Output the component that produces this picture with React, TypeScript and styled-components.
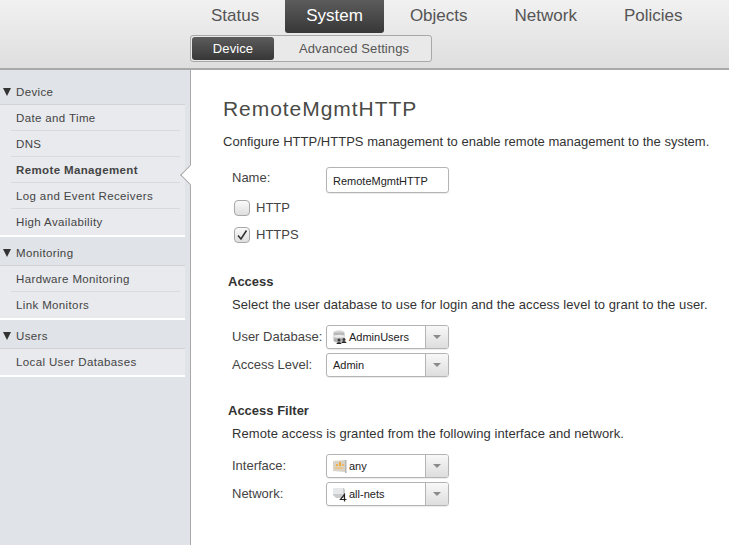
import type { ReactNode } from 'react';
import styled, { createGlobalStyle } from 'styled-components';

const GlobalStyle = createGlobalStyle`
    html, body {
        margin: 0;
        padding: 0;
        height: 100%;
        overflow: hidden;
        background: #fff;
        font-family: 'Liberation Sans', Arial, sans-serif;
    }
`;

const Page = styled.div`
    width: 729px;
    height: 545px;
    display: flex;
    flex-direction: column;
    color: #333;
    overflow: hidden;
`;

const Header = styled.header`
    height: 68px;
    flex-shrink: 0;
    box-sizing: content-box;
    border-bottom: 2px solid #a9a9a9;
    background: linear-gradient(#f1f1f1, #dedede);
    padding-left: 190px;
`;

const TopTabs = styled.nav`
    display: flex;
    gap: 5px;
    height: 33px;
    margin-bottom: 2px;
`;

const TopTab = styled.div<{ $active?: boolean }>`
    padding: 0 21px;
    font-size: 17px;
    line-height: 31px;
    border-radius: 0 0 3px 3px;
    color: ${({ $active }) => ($active ? '#fff' : '#555')};
    background: ${({ $active }) => ($active ? 'linear-gradient(#5c5c5c, #373737)' : 'none')};
`;

const SubTabs = styled.div`
    display: flex;
    box-sizing: border-box;
    width: 242px;
    height: 27px;
    padding: 1px;
    border: 1px solid #a8a8a8;
    border-radius: 3px;
    background: #e9e9e9;
`;

const SubTab = styled.div<{ $active?: boolean }>`
    box-sizing: border-box;
    width: ${({ $active }) => ($active ? '82px' : '156px')};
    padding-left: ${({ $active }) => ($active ? '0' : '25px')};
    text-align: ${({ $active }) => ($active ? 'center' : 'left')};
    font-size: 13px;
    letter-spacing: 0.1px;
    line-height: 23px;
    border-radius: 3px;
    color: ${({ $active }) => ($active ? '#fff' : '#555')};
    background: ${({ $active }) => ($active ? 'linear-gradient(#5c5c5c, #373737)' : 'none')};
`;

const Body = styled.div`
    flex: 1;
    display: flex;
    min-height: 0;
`;

const Sidebar = styled.aside`
    box-sizing: border-box;
    width: 191px;
    flex-shrink: 0;
    padding: 8px 5px 0 0;
    background: #e0e3e7;
    border-right: 1px solid #a9a9a9;
`;

const GroupTitle = styled.div`
    box-sizing: border-box;
    display: flex;
    align-items: center;
    gap: 5px;
    height: 27px;
    padding: 1px 0 0 3px;
    font-size: 11.5px;
    letter-spacing: 0.37px;
    color: #444;
    border-bottom: 1px solid #d0d2d5;
`;

const Arrow = styled.span`
    width: 0;
    height: 0;
    border-left: 4px solid transparent;
    border-right: 4px solid transparent;
    border-top: 8px solid #333;
`;

const Group = styled.div`
    background: #e8eaee;
    border-bottom: 2px solid #fff;
    margin-bottom: 2px;
`;

const Item = styled.div<{ $active?: boolean }>`
    position: relative;
    height: 26px;
    margin: 0 5px 0 11px;
    box-sizing: border-box;
    padding: 1px 0 0 5px;
    line-height: 25px;
    font-size: 11.5px;
    letter-spacing: 0.37px;
    font-weight: ${({ $active }) => ($active ? 700 : 400)};
    color: #444;
    border-bottom: 1px solid #d9dadd;
    &:last-child {
        border-bottom: none;
    }
`;

const Pointer = styled.span`
    position: absolute;
    right: -17px;
    top: 11px;
    width: 14px;
    height: 14px;
    background: #fff;
    border-left: 1px solid #a9a9a9;
    border-bottom: 1px solid #a9a9a9;
    box-sizing: border-box;
    transform: rotate(45deg);
`;

const Main = styled.main`
    flex: 1;
    padding: 26px 0 0 32px;
    background: #fff;
`;

const Title = styled.h1`
    margin: 0 0 12px;
    font-size: 21px;
    font-weight: 400;
    line-height: 26px;
    color: #4a4a46;
    letter-spacing: 0.95px;
`;

const Description = styled.p<{ $indent?: boolean }>`
    margin: 0;
    padding-left: ${({ $indent }) => ($indent ? '9px' : '0')};
    font-size: 13px;
    letter-spacing: ${({ $indent }) => ($indent ? '0.07px' : '0.02px')};
    line-height: 16px;
    color: #333;
    white-space: nowrap;
`;

const NameRow = styled.div`
    display: flex;
    align-items: center;
    height: 26px;
    margin-top: 17px;
    padding-left: 9px;
`;

const Label = styled.label`
    width: 94px;
    flex-shrink: 0;
    font-size: 13px;
    color: #444;
    position: relative;
    top: -3px;
`;

const TextInput = styled.div`
    box-sizing: border-box;
    width: 123px;
    height: 26px;
    padding-left: 6px;
    border: 1px solid #b4b4b4;
    border-radius: 3px;
    box-shadow: 0 1px 1px rgba(0, 0, 0, 0.08);
    font-size: 11px;
    line-height: 26px;
    color: #222;
`;

const CheckRow = styled.div<{ $gap: number }>`
    display: flex;
    align-items: flex-start;
    gap: 6px;
    height: 16px;
    padding-left: 11px;
    margin-top: ${({ $gap }) => $gap}px;
    font-size: 13px;
    line-height: 15px;
    color: #444;
`;

const CheckBox = styled.span`
    box-sizing: border-box;
    display: flex;
    align-items: center;
    justify-content: center;
    width: 16px;
    height: 16px;
    border: 1px solid #a8a8a8;
    border-radius: 4px;
    background: linear-gradient(#fafafa, #dedede);
`;

const SectionTitle = styled.h2<{ $top: number }>`
    margin: ${({ $top }) => $top}px 0 7px 5px;
    font-size: 13px;
    line-height: 16px;
    font-weight: 700;
    color: #333;
`;

const SelectRows = styled.div`
    margin-top: 12px;
    display: flex;
    flex-direction: column;
    gap: 4px;
`;

const SelectRow = styled.div`
    display: flex;
    align-items: center;
    height: 24px;
    padding-left: 9px;
`;

const SelectLabel = styled.span`
    width: 94px;
    flex-shrink: 0;
    font-size: 13px;
    color: #444;
    white-space: nowrap;
    position: relative;
    top: -1px;
`;

const Select = styled.div`
    box-sizing: border-box;
    display: flex;
    width: 123px;
    height: 24px;
    border: 1px solid #b4b4b4;
    border-radius: 3px;
    box-shadow: 0 1px 1px rgba(0, 0, 0, 0.08);
    overflow: hidden;
`;

const SelectValue = styled.div`
    flex: 1;
    display: flex;
    align-items: center;
    gap: 1px;
    padding-left: 6px;
    font-size: 11px;
    color: #222;
`;

const SelectButton = styled.div`
    display: flex;
    align-items: center;
    justify-content: center;
    width: 22px;
    border-left: 1px solid #b4b4b4;
    background: linear-gradient(#f8f8f8, #dddddd);
`;

const Caret = styled.span`
    width: 0;
    height: 0;
    border-left: 4px solid transparent;
    border-right: 4px solid transparent;
    border-top: 4px solid #8a8a8a;
`;

const DatabaseIcon = () => (
    <svg width="15" height="15" viewBox="0 0 15 15">
        <ellipse cx="6" cy="2.500" rx="5.500" ry="2.200" fill="#d8d8d8" />
        <rect x="0.500" y="2.500" width="11" height="8" fill="#b8b8b8" />
        <ellipse cx="6" cy="6.300" rx="5.500" ry="1.500" fill="#ececec" />
        <ellipse cx="6" cy="10.500" rx="5.500" ry="2" fill="#b0b0b0" />
        <circle cx="6" cy="10" r="1.500" fill="#3a3a3a" />
        <circle cx="11" cy="9.500" r="1.500" fill="#3a3a3a" />
        <path d="M3.500 14c0-2.500 5-2.500 5 0zM8.500 13c0-2.500 5-2.500 5 0z" fill="#222" />
    </svg>
);

const InterfaceIcon = () => (
    <svg width="15" height="15" viewBox="0 0 15 15">
        <path d="M0 2l12-1v12l-12-1z" fill="#d8d3c6" />
        <path d="M12 1h1.500v13H12z" fill="#b3b3b3" />
        <rect x="3" y="5" width="2" height="2" fill="#eeb04e" />
        <rect x="6" y="3" width="2" height="4" fill="#eea93f" />
        <rect x="9" y="5" width="2" height="2" fill="#eeb96b" />
        <rect x="2" y="8" width="8" height="2" fill="#e9c58c" />
    </svg>
);

const NetworkIcon = () => (
    <svg width="15" height="15" viewBox="0 0 15 15">
        <path d="M0 1h11l1 2v8H3L0 8z" fill="#c9cbcd" />
        <path d="M0 1h10v6H0z" fill="#e6e8ea" />
        <path d="M11.500 14.500V7.500L7.500 12.500h6" fill="none" stroke="#222" strokeWidth="1.200" />
    </svg>
);

const SelectField = ({ label, value, icon }: { label: string; value: string; icon?: ReactNode }) => (
    <SelectRow>
        <SelectLabel>{label}</SelectLabel>
        <Select>
            <SelectValue>
                {icon}
                {value}
            </SelectValue>
            <SelectButton>
                <Caret />
            </SelectButton>
        </Select>
    </SelectRow>
);

const groups = [
    {
        title: 'Device',
        items: ['Date and Time', 'DNS', 'Remote Management', 'Log and Event Receivers', 'High Availability'],
    },
    { title: 'Monitoring', items: ['Hardware Monitoring', 'Link Monitors'] },
    { title: 'Users', items: ['Local User Databases'] },
];

const App = () => (
    <Page>
        <GlobalStyle />
        <Header>
            <TopTabs>
                <TopTab>Status</TopTab>
                <TopTab $active>System</TopTab>
                <TopTab>Objects</TopTab>
                <TopTab>Network</TopTab>
                <TopTab>Policies</TopTab>
            </TopTabs>
            <SubTabs>
                <SubTab $active>Device</SubTab>
                <SubTab>Advanced Settings</SubTab>
            </SubTabs>
        </Header>
        <Body>
            <Sidebar>
                {groups.map((group) => (
                    <div key={group.title}>
                        <GroupTitle>
                            <Arrow />
                            {group.title}
                        </GroupTitle>
                        <Group>
                            {group.items.map((item) => (
                                <Item key={item} $active={item === 'Remote Management'}>
                                    {item}
                                    {item === 'Remote Management' && <Pointer />}
                                </Item>
                            ))}
                        </Group>
                    </div>
                ))}
            </Sidebar>
            <Main>
                <Title>RemoteMgmtHTTP</Title>
                <Description>Configure HTTP/HTTPS management to enable remote management to the system.</Description>
                <NameRow>
                    <Label>Name:</Label>
                    <TextInput>RemoteMgmtHTTP</TextInput>
                </NameRow>
                <CheckRow $gap={7}>
                    <CheckBox />
                    HTTP
                </CheckRow>
                <CheckRow $gap={11}>
                    <CheckBox>
                        <svg width="12" height="12" viewBox="0 0 12 12">
                            <path d="M2 6.500l3 3.500L10.500 1.500" fill="none" stroke="#333" strokeWidth="1.600" />
                        </svg>
                    </CheckBox>
                    HTTPS
                </CheckRow>
                <SectionTitle $top={31}>Access</SectionTitle>
                <Description $indent>Select the user database to use for login and the access level to grant to the user.</Description>
                <SelectRows>
                    <SelectField label="User Database:" value="AdminUsers" icon={<DatabaseIcon />} />
                    <SelectField label="Access Level:" value="Admin" />
                </SelectRows>
                <SectionTitle $top={26}>Access Filter</SectionTitle>
                <Description $indent>Remote access is granted from the following interface and network.</Description>
                <SelectRows>
                    <SelectField label="Interface:" value="any" icon={<InterfaceIcon />} />
                    <SelectField label="Network:" value="all-nets" icon={<NetworkIcon />} />
                </SelectRows>
            </Main>
        </Body>
    </Page>
);

export default App;
